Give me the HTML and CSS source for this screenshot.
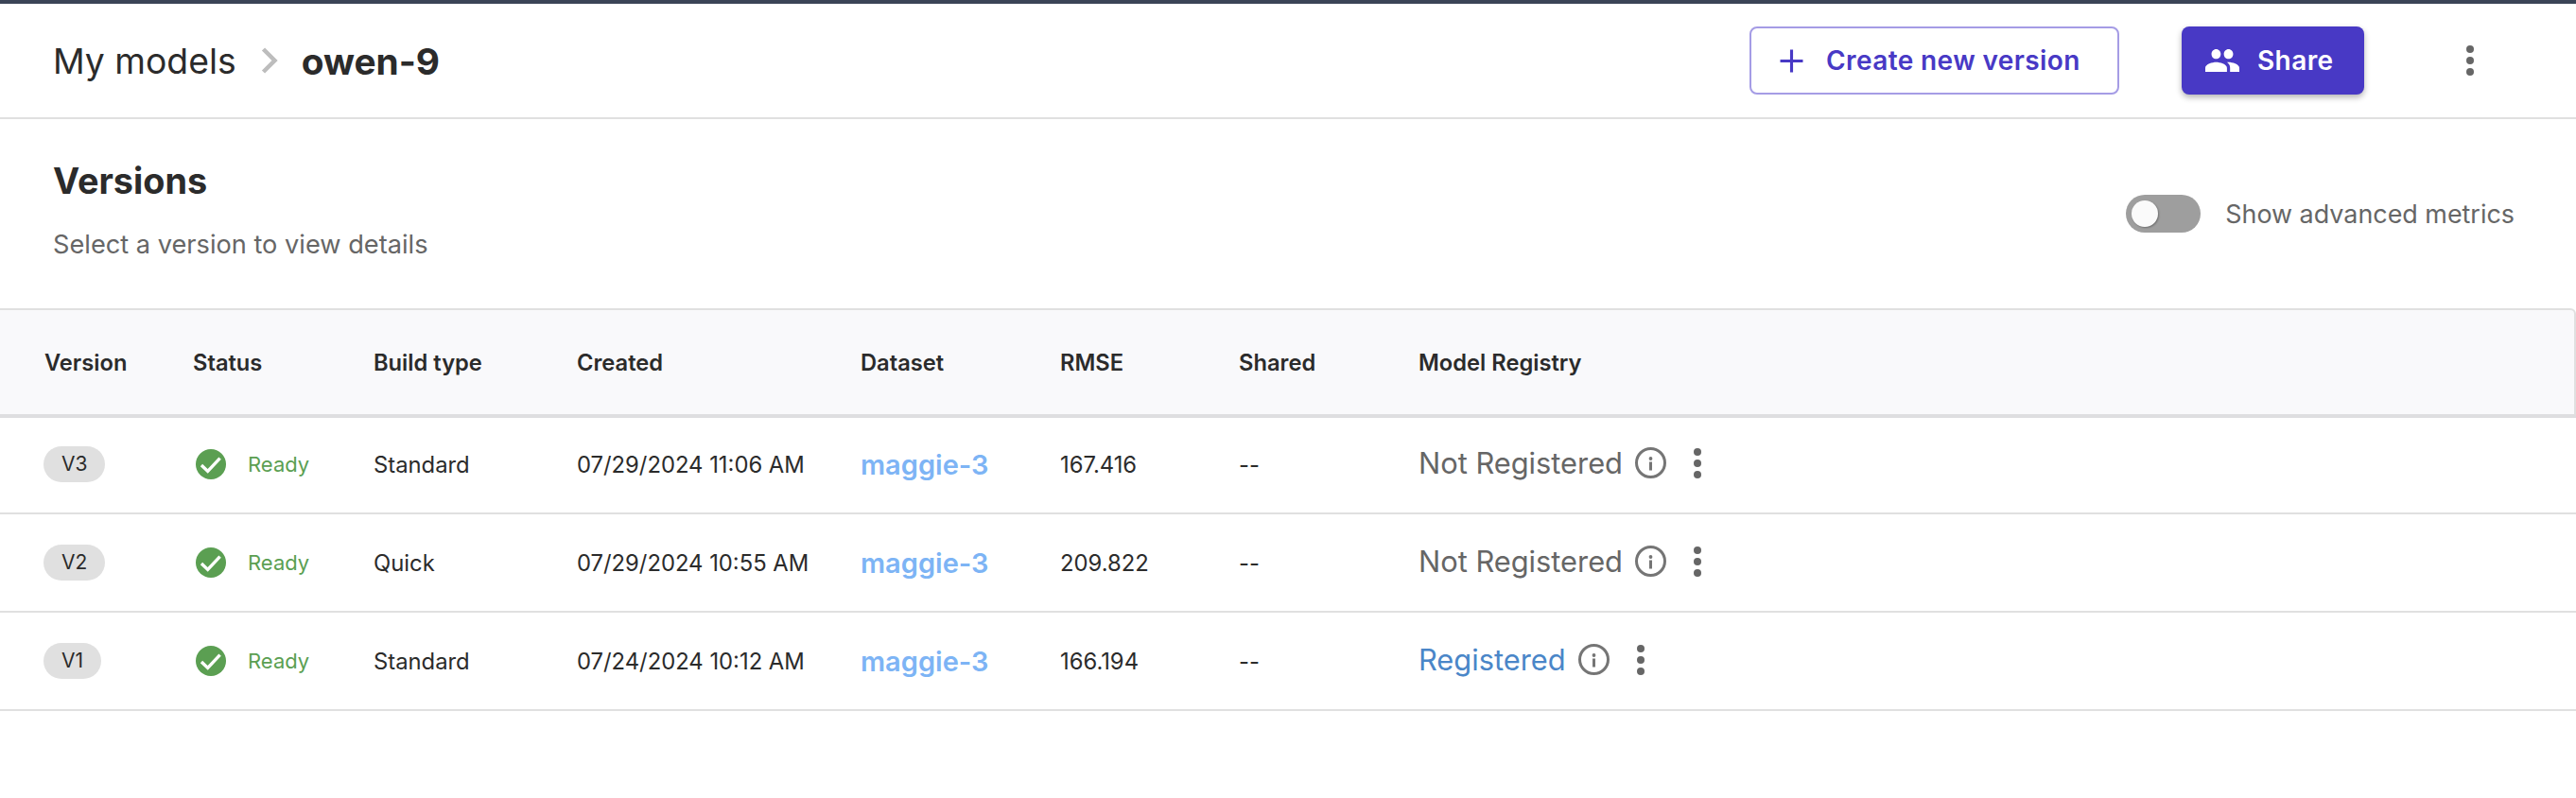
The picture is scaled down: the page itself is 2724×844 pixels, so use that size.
FILE: index.html
```html
<!DOCTYPE html>
<html lang="en">
<head>
  <meta charset="UTF-8">
  <meta name="viewport" content="width=device-width, initial-scale=1.0">
  <title>owen-9 - Versions</title>
  <link rel="stylesheet" href="styles.css">
</head>
<body>
  <header class="page-header">
    <div class="breadcrumb">
      <span class="breadcrumb-link">My models</span>
      <svg class="breadcrumb-chevron" viewBox="0 0 18 28"><path d="M2.5 2 L14.5 14 L2.5 26" fill="none" stroke="#bdbdbd" stroke-width="4.5"/></svg>
      <span class="breadcrumb-current">owen-9</span>
    </div>
    <div class="header-actions">
      <button class="btn btn-outline">
        <svg class="btn-plus" viewBox="0 0 24 24"><path d="M12 0.5 V23.5 M0.5 12 H23.5" fill="none" stroke="currentColor" stroke-width="3"/></svg>
        Create new version
      </button>
      <button class="btn btn-primary">
        <svg class="btn-people" viewBox="1 5 22 14" preserveAspectRatio="none"><path fill="currentColor" d="M16 11c1.66 0 2.99-1.34 2.99-3S17.66 5 16 5c-1.66 0-3 1.34-3 3s1.34 3 3 3zm-8 0c1.66 0 2.99-1.34 2.99-3S9.66 5 8 5C6.34 5 5 6.34 5 8s1.34 3 3 3zm0 2c-2.33 0-7 1.17-7 3.5V19h14v-2.5c0-2.33-4.67-3.5-7-3.5zm8 0c-.29 0-.62.02-.97.05 1.16.84 1.97 1.97 1.97 3.45V19h6v-2.5c0-2.33-4.67-3.5-7-3.5z"/></svg>
        Share
      </button>
      <svg class="kebab kebab-header" viewBox="0 0 8 32"><circle cx="4" cy="4" r="4"/><circle cx="4" cy="16" r="4"/><circle cx="4" cy="28" r="4"/></svg>
    </div>
  </header>

  <section class="versions-intro">
    <div class="versions-text">
      <h1>Versions</h1>
      <p>Select a version to view details</p>
    </div>
    <div class="metrics-toggle">
      <span class="switch"><span class="switch-knob"></span></span>
      <span>Show advanced metrics</span>
    </div>
  </section>

  <div class="versions-table">
    <div class="table-row table-head">
      <div>Version</div>
      <div>Status</div>
      <div>Build type</div>
      <div>Created</div>
      <div>Dataset</div>
      <div>RMSE</div>
      <div>Shared</div>
      <div>Model Registry</div>
    </div>

    <div class="table-row">
      <div><span class="pill">V3</span></div>
      <div class="status">
        <svg class="status-icon" viewBox="0 0 32 32"><circle cx="16" cy="16" r="16" fill="#5b9f52"/><path d="M6 17 L12.7 23.4 L25.6 9.6" fill="none" stroke="#fff" stroke-width="3.4"/></svg>
        <span>Ready</span>
      </div>
      <div>Standard</div>
      <div>07/29/2024 11:06 AM</div>
      <div class="dataset">maggie-3</div>
      <div>167.416</div>
      <div>--</div>
      <div class="registry">
        <span>Not Registered</span>
        <svg class="info-icon" viewBox="0 0 33 33"><circle cx="16.5" cy="16.5" r="15" fill="none" stroke="#757575" stroke-width="3"/><circle cx="16.5" cy="12" r="1.9" fill="#757575"/><rect x="15" y="15.5" width="3" height="9" fill="#757575"/></svg>
        <svg class="kebab" viewBox="0 0 8 32"><circle cx="4" cy="4" r="4"/><circle cx="4" cy="16" r="4"/><circle cx="4" cy="28" r="4"/></svg>
      </div>
    </div>

    <div class="table-row">
      <div><span class="pill">V2</span></div>
      <div class="status">
        <svg class="status-icon" viewBox="0 0 32 32"><circle cx="16" cy="16" r="16" fill="#5b9f52"/><path d="M6 17 L12.7 23.4 L25.6 9.6" fill="none" stroke="#fff" stroke-width="3.4"/></svg>
        <span>Ready</span>
      </div>
      <div>Quick</div>
      <div>07/29/2024 10:55 AM</div>
      <div class="dataset">maggie-3</div>
      <div>209.822</div>
      <div>--</div>
      <div class="registry">
        <span>Not Registered</span>
        <svg class="info-icon" viewBox="0 0 33 33"><circle cx="16.5" cy="16.5" r="15" fill="none" stroke="#757575" stroke-width="3"/><circle cx="16.5" cy="12" r="1.9" fill="#757575"/><rect x="15" y="15.5" width="3" height="9" fill="#757575"/></svg>
        <svg class="kebab" viewBox="0 0 8 32"><circle cx="4" cy="4" r="4"/><circle cx="4" cy="16" r="4"/><circle cx="4" cy="28" r="4"/></svg>
      </div>
    </div>

    <div class="table-row">
      <div><span class="pill">V1</span></div>
      <div class="status">
        <svg class="status-icon" viewBox="0 0 32 32"><circle cx="16" cy="16" r="16" fill="#5b9f52"/><path d="M6 17 L12.7 23.4 L25.6 9.6" fill="none" stroke="#fff" stroke-width="3.4"/></svg>
        <span>Ready</span>
      </div>
      <div>Standard</div>
      <div>07/24/2024 10:12 AM</div>
      <div class="dataset">maggie-3</div>
      <div>166.194</div>
      <div>--</div>
      <div class="registry">
        <span class="registered">Registered</span>
        <svg class="info-icon" viewBox="0 0 33 33"><circle cx="16.5" cy="16.5" r="15" fill="none" stroke="#757575" stroke-width="3"/><circle cx="16.5" cy="12" r="1.9" fill="#757575"/><rect x="15" y="15.5" width="3" height="9" fill="#757575"/></svg>
        <svg class="kebab" viewBox="0 0 8 32"><circle cx="4" cy="4" r="4"/><circle cx="4" cy="16" r="4"/><circle cx="4" cy="28" r="4"/></svg>
      </div>
    </div>
  </div>
</body>
</html>
```

FILE: styles.css
```css
:root {
  --primary-color: #4839c5;
  --text-color: #2b2b2b;
  --muted-color: #666;
  --line-color: #e0e0e0;
}

body, html {
  margin: 0;
  padding: 0;
  font-family: Inter, 'Noto Sans', sans-serif;
  background: white;
  color: var(--text-color);
}

body {
  border-top: 4px solid #3b4457;
}

/* Top bar */
.page-header {
  display: flex;
  align-items: center;
  justify-content: space-between;
  height: 120px;
  padding-left: 56px;
  border-bottom: 2px solid var(--line-color);
}

.breadcrumb {
  display: flex;
  align-items: center;
  font-size: 37.3px;
}

.breadcrumb-chevron {
  width: 18px;
  height: 28px;
  margin: 0 25px 0 26px;
}

.breadcrumb-current {
  font-size: 38.8px;
  font-weight: 700;
}

.header-actions {
  display: flex;
  align-items: center;
  padding-right: 108px;
}

.btn {
  display: flex;
  align-items: center;
  height: 72px;
  box-sizing: border-box;
  border-radius: 8px;
  font-family: inherit;
  font-size: 28px;
  font-weight: 600;
  letter-spacing: 0.4px;
  cursor: pointer;
}

.btn-outline {
  width: 391px;
  padding: 0 0 0 30px;
  margin-right: 66px;
  background: white;
  border: 2px solid #a59ce5;
  color: var(--primary-color);
}

.btn-plus {
  width: 25px;
  height: 25px;
  margin-right: 24px;
}

.btn-primary {
  width: 193px;
  padding: 0 0 0 25px;
  margin-right: 108px;
  background: var(--primary-color);
  border: none;
  color: white;
  box-shadow: 0 3px 6px rgba(0, 0, 0, 0.3);
}

.btn-people {
  width: 36px;
  height: 24px;
  margin-right: 19px;
}

.kebab {
  fill: #666;
  width: 8px;
  height: 32px;
}

/* Versions heading */
.versions-intro {
  display: flex;
  align-items: center;
  justify-content: space-between;
  height: 200px;
  padding: 0 65px 0 56px;
}

.versions-text {
  align-self: flex-start;
  padding-top: 42px;
}

h1 {
  font-size: 37.8px;
  font-weight: 700;
  margin: 0 0 28px;
}

.versions-text p {
  font-size: 27.2px;
  color: var(--muted-color);
  margin: 0;
}

.metrics-toggle {
  display: flex;
  align-items: center;
  gap: 26px;
  font-size: 26.9px;
  color: var(--muted-color);
}

.switch {
  display: flex;
  align-items: center;
  width: 79px;
  height: 40px;
  padding-left: 6px;
  box-sizing: border-box;
  border-radius: 20px;
  background: #9e9e9e;
}

.switch-knob {
  width: 28px;
  height: 28px;
  border-radius: 50%;
  background: #fafafa;
  box-shadow: 1px 1px 2px rgba(0, 0, 0, 0.3);
}

/* Table */
.versions-table {
  font-size: 23.8px;
}

.table-row {
  display: grid;
  grid-template-columns: 157px 191px 215px 300px 211px 189px 190px 1fr;
  align-items: center;
  height: 102px;
  padding-left: 47px;
  border-bottom: 2px solid var(--line-color);
}

/* header strip runs 2px over the first row, so row one looks shorter */
.table-head {
  height: 114px;
  box-sizing: border-box;
  background: #f9f9fb;
  border-top: 2px solid var(--line-color);
  border-right: 2px solid var(--line-color);
  border-bottom: 2px solid #dedee0;
  border-top-right-radius: 6px;
  box-shadow: 0 2px 0 #dedee0;
  font-size: 23.7px;
  font-weight: 600;
}

.pill {
  display: inline-block;
  height: 38px;
  line-height: 38px;
  padding: 0 19px;
  margin-left: -1px;
  border-radius: 19px;
  background: #e0e0e0;
  font-size: 21px;
}

.status {
  display: flex;
  align-items: center;
  color: #5b9f52;
  font-size: 22px;
}

.status-icon {
  width: 32px;
  height: 32px;
  margin: 0 23px 0 3px;
}

.dataset {
  color: #7db4f5;
  font-size: 29px;
  font-weight: 600;
}

.registry {
  display: flex;
  align-items: center;
  padding-bottom: 3px;
  font-size: 30.8px;
  color: var(--muted-color);
}

.registered {
  color: #4a86c8;
}

.info-icon {
  width: 33px;
  height: 33px;
  margin: 0 29px 0 13px;
}
```
